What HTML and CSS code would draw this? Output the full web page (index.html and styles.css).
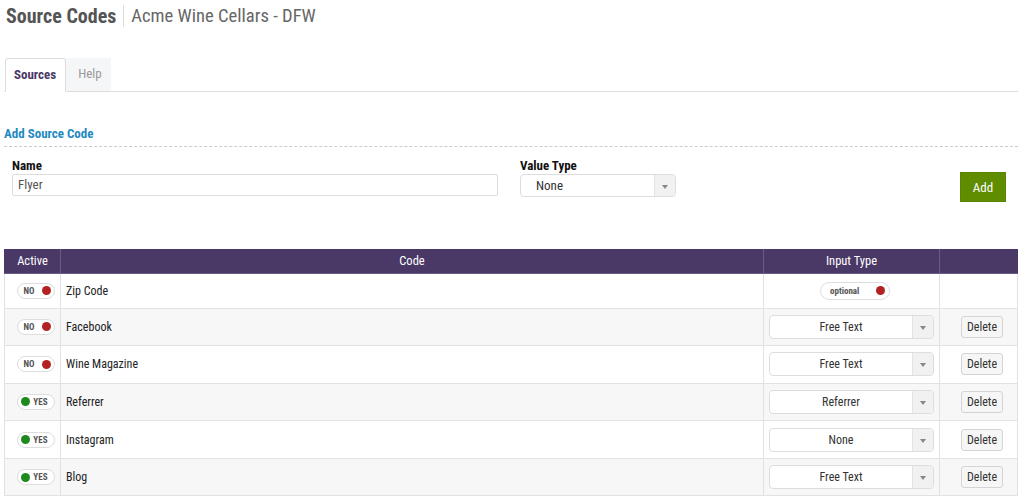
FILE: index.html
```html
<!DOCTYPE html>
<html>
<head>
<meta charset="utf-8">
<link rel="stylesheet" href="styles.css">
</head>
<body>
<div class="page">
  <header class="title">
    <h1>Source Codes</h1>
    <span class="sep"></span>
    <span class="sub">Acme Wine Cellars - DFW</span>
  </header>

  <nav class="tabs">
    <a class="tab active">Sources</a>
    <a class="tab">Help</a>
  </nav>

  <section class="add">
    <h2>Add Source Code</h2>
    <div class="form">
      <div class="field name">
        <label>Name</label>
        <div class="input">Flyer</div>
      </div>
      <div class="field vtype">
        <label>Value Type</label>
        <div class="select left"><span class="val">None</span><span class="arrow"></span></div>
      </div>
      <button class="btn-add">Add</button>
    </div>
  </section>

  <table class="grid">
    <thead>
      <tr><th class="c-active">Active</th><th>Code</th><th class="c-type">Input Type</th><th class="c-act"></th></tr>
    </thead>
    <tbody>
      <tr class="short">
        <td class="c-active"><span class="toggle off"><b>NO</b><i></i></span></td>
        <td>Zip Code</td>
        <td class="center pillcell"><span class="pill"><b>optional</b><i></i></span></td>
        <td></td>
      </tr>
      <tr>
        <td class="c-active"><span class="toggle off"><b>NO</b><i></i></span></td>
        <td>Facebook</td>
        <td><div class="select"><span class="val">Free Text</span><span class="arrow"></span></div></td>
        <td class="center delcell"><button class="del">Delete</button></td>
      </tr>
      <tr>
        <td class="c-active"><span class="toggle off"><b>NO</b><i></i></span></td>
        <td>Wine Magazine</td>
        <td><div class="select"><span class="val">Free Text</span><span class="arrow"></span></div></td>
        <td class="center delcell"><button class="del">Delete</button></td>
      </tr>
      <tr>
        <td class="c-active"><span class="toggle on"><i></i><b>YES</b></span></td>
        <td>Referrer</td>
        <td><div class="select"><span class="val">Referrer</span><span class="arrow"></span></div></td>
        <td class="center delcell"><button class="del">Delete</button></td>
      </tr>
      <tr>
        <td class="c-active"><span class="toggle on"><i></i><b>YES</b></span></td>
        <td>Instagram</td>
        <td><div class="select"><span class="val">None</span><span class="arrow"></span></div></td>
        <td class="center delcell"><button class="del">Delete</button></td>
      </tr>
      <tr>
        <td class="c-active"><span class="toggle on"><i></i><b>YES</b></span></td>
        <td>Blog</td>
        <td><div class="select"><span class="val">Free Text</span><span class="arrow"></span></div></td>
        <td class="center delcell"><button class="del">Delete</button></td>
      </tr>
    </tbody>
  </table>
</div>
</body>
</html>
```
FILE: styles.css
```css
* { box-sizing: border-box; }
html, body { margin: 0; padding: 0; background: #fff; }
body {
  font-family: "Roboto", "Open Sans", sans-serif;
  font-stretch: 75%;
  font-size: 13px;
  color: #222;
}
button { font-stretch: 75%; }
.page { padding: 0 6px 0 4px; }

.title { display: flex; align-items: center; height: 32px; padding-left: 2px; }
.title h1 { margin: 0; font-size: 20px; font-weight: bold; color: #555; }
.sep { width: 1px; height: 22px; background: #ddd; margin: 0 7px 0 7px; }
.sub { font-size: 18.6px; color: #666; }

.tabs { display: flex; margin-top: 27px; border-bottom: 1px solid #ddd; height: 33px; align-items: flex-end; padding-left: 1px; }
.tab { display: block; height: 33px; line-height: 31px; padding: 0 9px 0 12px; font-size: 13px; color: #999; background: #f5f6f8; }
.tab.active { background: #fff; border: 1px solid #ddd; border-bottom-color: #fff; border-radius: 3px 3px 0 0; margin-bottom: -1px; height: 34px; font-weight: bold; color: #4a3866; padding: 0 9px 0 8px; }

.add { margin-top: 34px; }
.add h2 { margin: 0; font-size: 13px; font-weight: bold; color: #1f8ac0; padding-bottom: 5px; border-bottom: 1px dashed #ccc; height: 21px; }
.form { display: flex; align-items: flex-start; margin-top: 11px; padding-left: 8px; }
.field label { display: block; font-weight: bold; font-size: 13px; color: #111; height: 16px; }
.name { width: 486px; }
.input { height: 22px; border: 1px solid #ddd; border-radius: 2px; padding: 2px 5px; color: #555; }
.vtype { margin-left: 22px; width: 156px; }
.select { display: flex; height: 24px; border: 1px solid #ddd; border-radius: 4px; overflow: hidden; background: #fff; }
.field .select { height: 23px; }
.select .val { flex: 1; text-align: center; line-height: 22px; color: #333; }
.select.left .val { text-align: left; padding-left: 15px; }
.select .arrow { width: 21px; border-left: 1px solid #e3e3e3; background: #f1f1f1; position: relative; }
.select .arrow::after { content: ""; position: absolute; left: 7px; top: 10px; border-left: 3.5px solid transparent; border-right: 3.5px solid transparent; border-top: 4px solid #888; }
.btn-add { margin-left: auto; margin-right: 12px; margin-top: 14px; width: 46px; height: 30px; border: 1px solid #5a8500; background: #608c00; color: #fff; font-family: inherit; font-size: 13px; padding: 0; }

.grid { width: 1014px; margin-top: 47px; border-collapse: collapse; font-size: 12px; }
.grid th { background: #4a3866; color: #fff; font-weight: normal; height: 24px; padding: 0; border: 1px solid #6a5a85; border-top: none; font-size: 12.5px; }
.grid th:first-child { border-left: 1px solid #4a3866; }
.grid th:last-child { border-right: 1px solid #4a3866; }
.grid td { border: 1px solid #e2e2e6; height: 37.6px; padding: 0 5px; color: #222; font-size: 12px; }
.grid tr.short td { height: 35px; }
.grid tbody tr:nth-child(even) td { background: #f7f7f8; }
.c-active { width: 56px; text-align: center; }
.grid td.c-active { padding: 0 0 0 6px; }
.grid td.pillcell { padding-left: 12px; }
.grid td.delcell { padding-left: 12px; }
.c-type { width: 176px; }
.c-act { width: 78px; }
.center { text-align: center; }

.toggle { display: inline-flex; align-items: center; justify-content: space-between; width: 38px; height: 16px; border: 1px solid #ddd; border-radius: 8px; padding: 0 3px 0 6px; vertical-align: middle; background: #fff; }
.toggle.on { padding: 0 6px 0 3px; }
.toggle b, .pill b { font-size: 9px; font-weight: bold; color: #555; }
.toggle i, .pill i { width: 9px; height: 9px; border-radius: 50%; background: #b22222; display: block; }
.toggle.on i { background: #1e8a1e; }
.pill { display: inline-flex; align-items: center; justify-content: space-between; width: 70px; height: 18px; border: 1px solid #ddd; border-radius: 9px; padding: 0 4px 0 9px; vertical-align: middle; }

.del { width: 42px; height: 22px; border: 1px solid #d4d4d4; border-radius: 3px; background: #f6f6f6; font-family: inherit; font-size: 12px; color: #333; padding: 0; }
```
